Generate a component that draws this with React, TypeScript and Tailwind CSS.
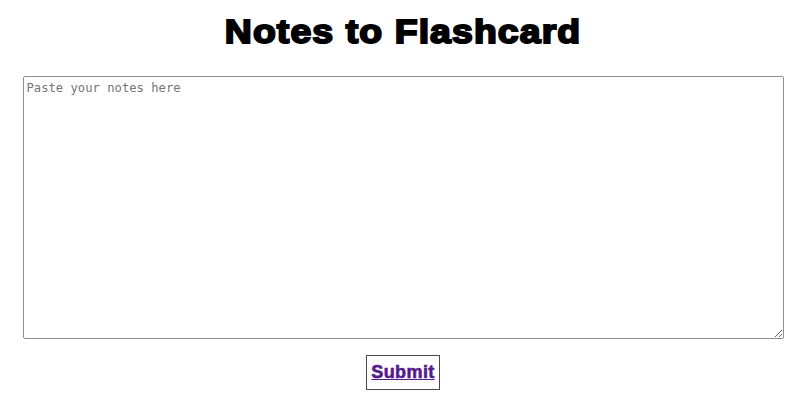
export default function App() {
  return (
    <div className="flex flex-col items-center bg-white w-[806px] h-[401px]">
      <h1
        className="mt-[11px] text-[34px] leading-[40px] font-bold text-black [font-family:'Liberation_Sans',Arial,sans-serif] [-webkit-text-stroke:2px_black] tracking-[1px] scale-x-[1.1]"
      >
        Notes to Flashcard
      </h1>
      <textarea
        placeholder="Paste your notes here"
        className="mt-[25px] w-[761px] h-[263px] border border-[#8f8f8f] rounded-[2px] px-[3px] py-[3px] text-[12.2px] leading-[17px] [font-family:'DejaVu_Sans_Mono',monospace] placeholder:text-[#757575] outline-none"
      />
      <button className="mt-[16px] w-[74px] h-[35px] border border-[#4a4a4a] bg-white flex items-center justify-center">
        <span className="text-[18px] font-bold text-[#551a8b] underline tracking-[0.4px] [font-family:'Liberation_Sans',Arial,sans-serif] [-webkit-text-stroke:0.6px_#551a8b]">
          Submit
        </span>
      </button>
    </div>
  );
}
